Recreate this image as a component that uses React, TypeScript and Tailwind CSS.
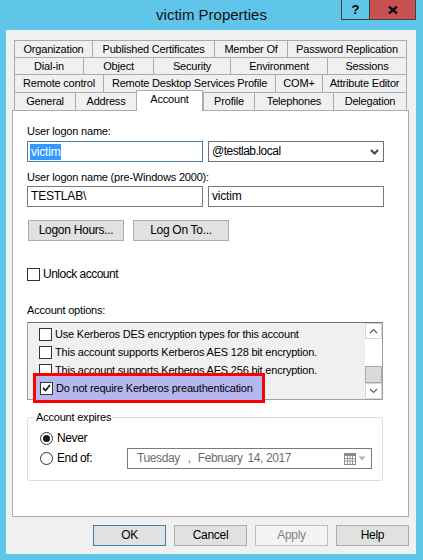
import * as React from "react"

type Tab = { label: string; w: string; active?: boolean }

const tabRows: { h: string; tabs: Tab[] }[] = [
  {
    h: "h-[17px]",
    tabs: [
      { label: "Organization", w: "w-[78px]" },
      { label: "Published Certificates", w: "w-[122px]" },
      { label: "Member Of", w: "w-[73px]" },
      { label: "Password Replication", w: "w-[120px]" },
    ],
  },
  {
    h: "h-[17px]",
    tabs: [
      { label: "Dial-in", w: "w-[69px]" },
      { label: "Object", w: "w-[70px]" },
      { label: "Security", w: "w-[77px]" },
      { label: "Environment", w: "w-[97px]" },
      { label: "Sessions", w: "w-[80px]" },
    ],
  },
  {
    h: "h-[18px]",
    tabs: [
      { label: "Remote control", w: "w-[89px]" },
      { label: "Remote Desktop Services Profile", w: "w-[172px]" },
      { label: "COM+", w: "w-[47px]" },
      { label: "Attribute Editor", w: "w-[85px]" },
    ],
  },
  {
    h: "h-[18px]",
    tabs: [
      { label: "General", w: "w-[61px]" },
      { label: "Address", w: "w-[61px]" },
      { label: "Account", w: "w-[67px]", active: true },
      { label: "Profile", w: "w-[51px]" },
      { label: "Telephones", w: "w-[79px]" },
      { label: "Delegation", w: "w-[74px]" },
    ],
  },
]

// the selected row sits under the red annotation, so it is drawn there instead
const options = [
  { label: "Use Kerberos DES encryption types for this account" },
  { label: "This account supports Kerberos AES 128 bit encryption." },
  { label: "This account supports Kerberos AES 256 bit encryption." },
]

function Checkbox({ checked }: { checked?: boolean }) {
  return (
    <span className="flex h-[13px] w-[13px] shrink-0 items-center justify-center border border-[#333333] bg-white">
      {checked && (
        <svg width="9" height="8" viewBox="0 0 9 8">
          <path d="M1 4 L3.5 6.5 L8 1" fill="none" stroke="#222" strokeWidth="1.8" />
        </svg>
      )}
    </span>
  )
}

function Radio({ checked }: { checked?: boolean }) {
  return (
    <span className="flex h-[13px] w-[13px] shrink-0 items-center justify-center rounded-full border border-[#333333] bg-white">
      {checked && <span className="h-[7px] w-[7px] rounded-full bg-[#1a1a1a]" />}
    </span>
  )
}

function Chevron({ dir, color, sw }: { dir: "up" | "down"; color: string; sw: number }) {
  return (
    <svg width="9" height="6" viewBox="0 0 9 6">
      <path
        d={dir === "down" ? "M1 1 L4.5 4.5 L8 1" : "M1 5 L4.5 1.5 L8 5"}
        fill="none"
        stroke={color}
        strokeWidth={sw}
      />
    </svg>
  )
}

function Button({ children, variant }: { children: React.ReactNode; variant?: "default" | "disabled" }) {
  const cls =
    variant === "default"
      ? "border-[#3c7fb1] bg-[#e1e1e1] text-black"
      : variant === "disabled"
        ? "border-[#bfbfbf] bg-[#f4f4f4] text-[#838383]"
        : "border-[#adadad] bg-[#e1e1e1] text-black"
  return (
    <div className={`flex h-[21px] w-[73px] items-center justify-center border text-[12px] tracking-[-0.3px] ${cls}`}>
      {children}
    </div>
  )
}

export default function App() {
  return (
    <div className="flex h-[560px] w-[423px] flex-col bg-[#5fc5e9] font-['Liberation_Sans',Arial,sans-serif] text-[11px] leading-[13px] tracking-[-0.2px] text-black">
      {/* title bar */}
      <div className="relative flex h-[30px] shrink-0 items-center justify-center tracking-normal">
        <span className="text-[15px] leading-[18px] text-[#111]">victim Properties</span>
        <div className="absolute right-[7px] top-0 flex h-[20px] border-x border-b border-[#3f3f3f]">
          <div className="flex w-[27px] items-center justify-center text-[13px] font-bold">?</div>
          <div className="flex w-[46px] items-center justify-center border-l border-[#3f3f3f] bg-[#c75050]">
            <svg width="10" height="8" viewBox="0 0 10 8">
              <path d="M1 0.5 L9 7.5 M9 0.5 L1 7.5" stroke="#111" strokeWidth="2.4" />
            </svg>
          </div>
        </div>
      </div>

      {/* dialog body */}
      <div className="mx-[6px] h-[524px] w-[410px] bg-[#f0f0f0] px-[6px] pt-[10px]">
        <div className="ml-[2px] flex flex-col">
          {tabRows.map((row, ri) => (
            <div key={ri} className={`flex items-end ${row.h}`}>
              {row.tabs.map((t, i) => (
                <div
                  key={t.label}
                  className={`flex items-center justify-center whitespace-nowrap border-t border-l border-[#acacac] ${t.w} ${
                    i === row.tabs.length - 1 ? "border-r" : ""
                  } ${
                    t.active
                      ? "relative z-10 -mb-px h-[21px] border-r bg-white pb-[3px]"
                      : "h-full bg-[#f0f0f0]"
                  }`}
                >
                  {t.label}
                </div>
              ))}
            </div>
          ))}
        </div>

        {/* tab page */}
        <div className="h-[407px] w-[397px] border border-[#acacac] bg-white pl-[14px] pt-[14px]">
          <div>User logon name:</div>
          <div className="mt-[3px] flex gap-[5px]">
            <div className="flex h-[21px] w-[176px] items-center border border-[#4f7ba8] pl-[2px]">
              <span className="bg-[#3399ff] px-[1px] leading-[16px] text-white text-[12px]">victim</span>
            </div>
            <div className="flex h-[21px] w-[176px] items-center border border-[#707070] pl-[3px] pr-[4px] text-[12px] tracking-[-0.5px]">
              <span className="flex-1">@testlab.local</span>
              <Chevron dir="down" color="#444" sw={2} />
            </div>
          </div>

          <div className="mt-[9px]">User logon name (pre-Windows 2000):</div>
          <div className="mt-[2px] flex gap-[5px] text-[12px]">
            <div className="flex h-[21px] w-[176px] items-center border border-[#7a7a7a] pl-[3px]">TESTLAB\</div>
            <div className="flex h-[21px] w-[176px] items-center border border-[#7a7a7a] pl-[3px]">victim</div>
          </div>

          <div className="ml-px mt-[13px] flex gap-[9px] text-[12px] tracking-[-0.3px]">
            <div className="flex h-[21px] w-[96px] items-center justify-center border border-[#adadad] bg-[#e1e1e1]">
              Logon Hours...
            </div>
            <div className="flex h-[21px] w-[96px] items-center justify-center border border-[#adadad] bg-[#e1e1e1]">
              Log On To...
            </div>
          </div>

          <div className="mt-[27px] flex h-[13px] items-center gap-[3px]">
            <Checkbox />
            <span className="text-[12px] tracking-[-0.5px]">Unlock account</span>
          </div>

          <div className="mt-[23px]">Account options:</div>

          {/* options list */}
          <div className="relative mt-[5px] flex h-[78px] w-[356px] border border-[#a0a0a0] border-t-[#707070] bg-[#f0f0f0]">
            <div className="flex flex-1 flex-col overflow-hidden pl-[11px] pt-[2px]">
              {options.map((o) => (
                <div key={o.label} className="flex h-[18px] shrink-0 items-center gap-[3px] whitespace-nowrap">
                  <Checkbox />
                  <span>{o.label}</span>
                </div>
              ))}
            </div>
            <div className="flex w-[17px] flex-col bg-white">
              <div className="flex h-[16px] items-center justify-center border border-[#d6d6d6]">
                <Chevron dir="up" color="#606060" sw={1.2} />
              </div>
              <div className="h-[27px]" />
              <div className="h-[17px] border border-[#a9a9a9] bg-[#dadada]" />
              <div className="flex h-[16px] items-center justify-center border border-[#d6d6d6]">
                <Chevron dir="down" color="#606060" sw={1.2} />
              </div>
            </div>

            {/* red annotation over the selected row */}
            <div className="absolute left-[5px] top-[50px] flex h-[30px] w-[232px] items-center gap-[3px] border-[3px] border-[#ff0000] bg-[#b7b7f0] pl-[4px]">
              <Checkbox checked />
              <span className="whitespace-nowrap">Do not require Kerberos preauthentication</span>
            </div>
          </div>

          {/* account expires */}
          <fieldset className="mt-[11px] w-[356px] rounded-[3px] border border-[#dcdcdc] p-0 pb-[11px]">
            <legend className="ml-[7px] px-[1px]">Account expires</legend>
            <div className="mt-[4px] flex h-[20px] items-center pl-[12px]">
              <Radio checked />
              <span className="ml-[4px] text-[12px] tracking-[-0.4px]">Never</span>
            </div>
            <div className="flex h-[21px] items-center pl-[12px]">
              <Radio />
              <span className="ml-[4px] w-[70px] text-[12px] tracking-[-0.4px]">End of:</span>
              <div className="flex h-[21px] w-[245px] items-center border border-[#7a7a7a] pl-[9px] pr-[5px] text-[12px] tracking-[-0.4px] text-[#6d6d6d]">
                <span>Tuesday</span>
                <span className="ml-[8px]">,</span>
                <span className="ml-[7px]">February</span>
                <span className="ml-[5px]">14, 2017</span>
                <span className="ml-auto flex items-center gap-[2px]">
                  <svg width="12" height="12" viewBox="0 0 12 12">
                    <rect x="0.5" y="0.5" width="11" height="11" fill="#fff" stroke="#8a8a8a" />
                    <rect x="0.5" y="0.5" width="11" height="2.5" fill="#8a8a8a" />
                    <path d="M3.5 3 V11.5 M6 3 V11.5 M8.5 3 V11.5 M0.5 5.5 H11.5 M0.5 8 H11.5" stroke="#9a9a9a" strokeWidth="1" />
                  </svg>
                  <svg width="8" height="5" viewBox="0 0 8 5">
                    <path d="M0.5 0.5 L7.5 0.5 L4 4.5 Z" fill="#b0b0b0" />
                  </svg>
                </span>
              </div>
            </div>
          </fieldset>
        </div>

        {/* dialog buttons */}
        <div className="mt-[8px] flex justify-end gap-[8px] pr-[1px]">
          <Button variant="default">OK</Button>
          <Button>Cancel</Button>
          <Button variant="disabled">Apply</Button>
          <Button>Help</Button>
        </div>
      </div>
    </div>
  )
}
